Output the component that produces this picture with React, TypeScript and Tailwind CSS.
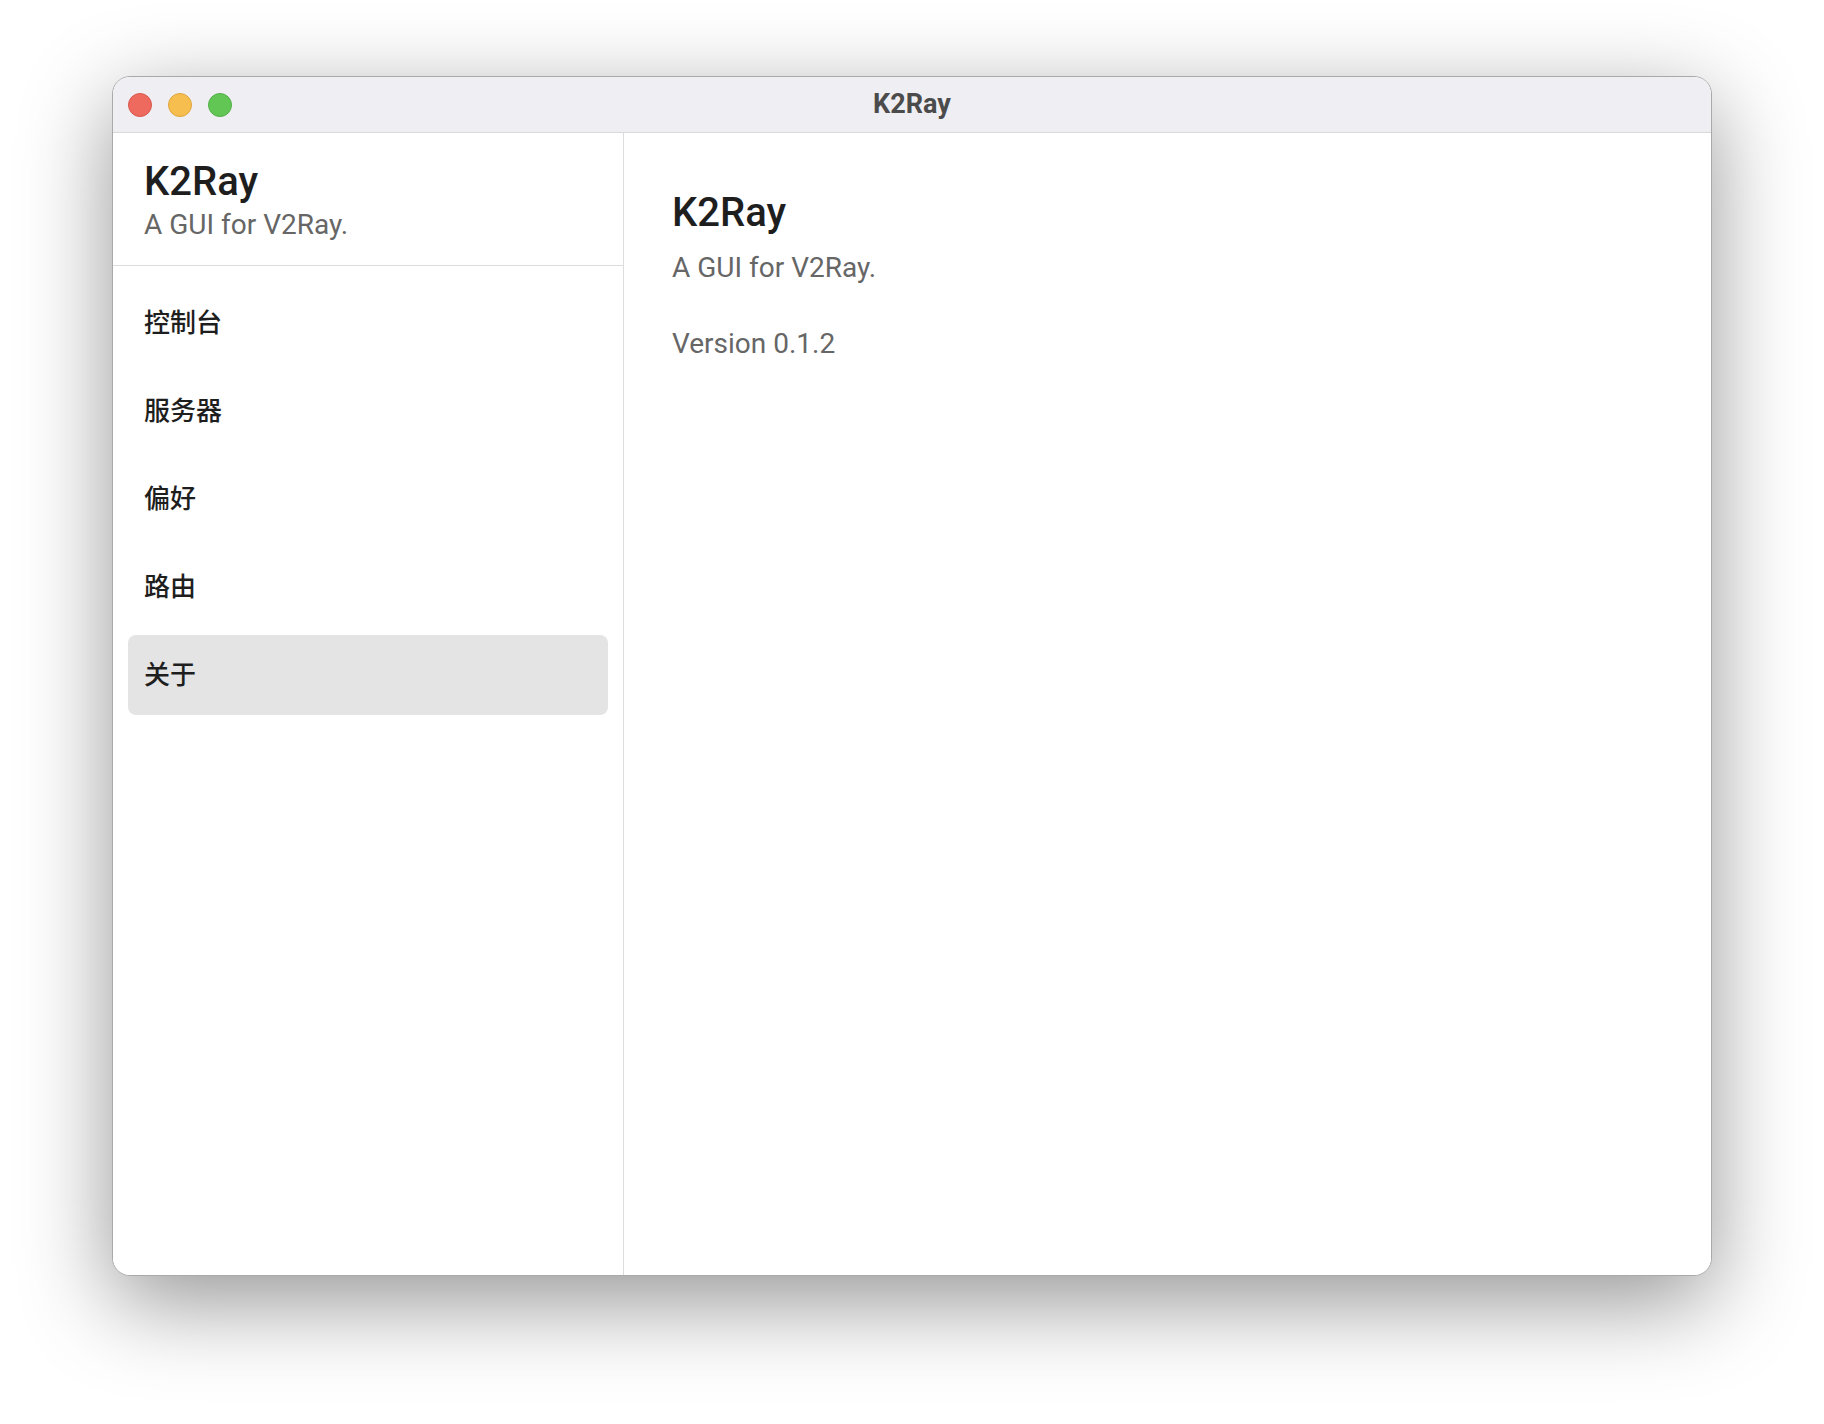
const NAV_ITEMS = ["控制台", "服务器", "偏好", "路由", "关于"];

const FONT = "font-['Roboto','Noto_Sans_CJK_SC',sans-serif]";

const TrafficLights = () => (
  <div className="flex items-center gap-4 pl-[15px]">
    <span className="h-6 w-6 rounded-full border border-[#d9574c] bg-[#ee6a5f]" />
    <span className="h-6 w-6 rounded-full border border-[#dfa53a] bg-[#f5be4f]" />
    <span className="h-6 w-6 rounded-full border border-[#52ad47] bg-[#62c655]" />
  </div>
);

const Sidebar = ({ active }: { active: string }) => (
  <aside className="flex w-[511px] shrink-0 flex-col border-r border-[#dcdcdc] bg-white">
    {/* Header */}
    <div className="border-b border-[#dcdcdc] pb-[23px] pl-[31px] pt-[25px]">
      <h1 className="text-[40px] font-medium leading-[48px] text-[#1e1e1e]">
        K2Ray
      </h1>
      <p className="mt-[2px] text-[28px] leading-[34px] text-[#666666]">
        A GUI for V2Ray.
      </p>
    </div>

    {/* Nav */}
    <nav className="flex flex-col gap-2 px-[15px] pt-[17px]">
      {NAV_ITEMS.map((item) => (
        <div
          key={item}
          className={
            item === active
              ? "flex h-20 items-center rounded-lg bg-[#e4e4e4] px-4 text-[26px] font-medium text-[#1e1e1e]"
              : "flex h-20 items-center rounded-lg px-4 text-[26px] font-medium text-[#1e1e1e]"
          }
        >
          {item}
        </div>
      ))}
    </nav>
  </aside>
);

const About = () => (
  <main className="flex-1 bg-white pl-12 pt-[56px]">
    <h2 className="text-[40px] font-medium leading-[48px] text-[#1e1e1e]">
      K2Ray
    </h2>
    <p className="mt-[14px] text-[28px] leading-[34px] text-[#666666]">
      A GUI for V2Ray.
    </p>
    <p className="mt-[42px] text-[28px] leading-[34px] text-[#666666]">
      Version 0.1.2
    </p>
  </main>
);

export default function App() {
  return (
    <div className={`flex min-h-screen justify-center bg-white pt-[76px] ${FONT}`}>
      <div className="flex h-[1200px] w-[1600px] flex-col overflow-hidden rounded-[18px] border border-[#a9a9a9] bg-white shadow-[0_26px_90px_rgba(0,0,0,0.42)]">
        {/* Title bar */}
        <div className="grid h-[56px] shrink-0 grid-cols-[1fr_auto_1fr] items-center border-b border-[#d9d9d9] bg-[#efeef2]">
          <TrafficLights />
          <div className="text-[27px] font-bold text-[#4b4b4b]">K2Ray</div>
          <div />
        </div>

        <div className="flex flex-1">
          <Sidebar active="关于" />
          <About />
        </div>
      </div>
    </div>
  );
}
